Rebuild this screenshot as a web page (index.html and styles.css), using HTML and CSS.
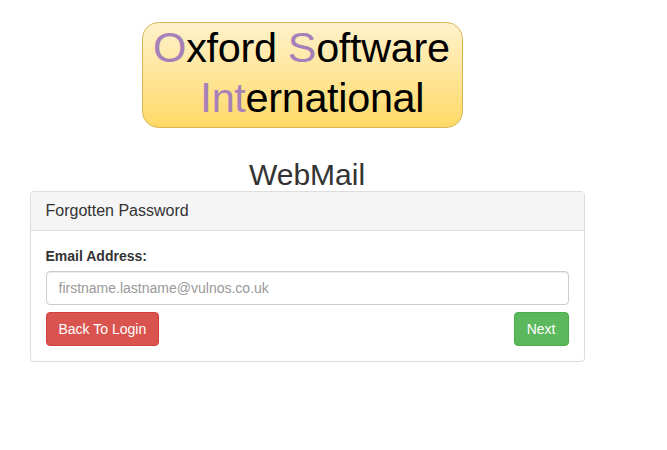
FILE: index.html
```html
<!DOCTYPE html>
<html lang="en">
<head>
<meta charset="utf-8">
<title>WebMail</title>
<link rel="stylesheet" href="styles.css">
</head>
<body>
<main class="container">
  <svg class="logo" width="322" height="107" viewBox="0 0 322 107" role="img">
    <defs>
      <linearGradient id="gold" x1="0" y1="0" x2="0" y2="1">
        <stop offset="0" stop-color="#fff2cc"/>
        <stop offset="1" stop-color="#ffd966"/>
      </linearGradient>
    </defs>
    <rect x="0.5" y="0.5" width="320" height="105" rx="16" fill="url(#gold)" stroke="#d6b656"/>
    <text class="logo-text" x="11" y="40.3" textLength="297"><tspan class="accent cap">O</tspan>xford <tspan class="accent cap">S</tspan>oftware</text>
    <text class="logo-text" x="58" y="90.3" textLength="224.5"><tspan class="accent cap">I</tspan><tspan class="accent">nt</tspan>ernational</text>
  </svg>
  <h1 class="title">WebMail</h1>
  <section class="panel">
    <header class="panel-heading">Forgotten Password</header>
    <form class="panel-body">
      <label class="label" for="email">Email Address:</label>
      <input class="input" id="email" type="text" placeholder="firstname.lastname@vulnos.co.uk">
      <div class="actions">
        <button class="btn btn-danger" type="button">Back To Login</button>
        <button class="btn btn-success" type="button">Next</button>
      </div>
    </form>
  </section>
</main>
</body>
</html>
```
FILE: styles.css
```css
* { box-sizing: border-box; }
body {
  margin: 0;
  background: #fff;
  color: #333;
  font: 14px/20px "Liberation Sans", Arial, sans-serif;
}
.container {
  width: 555px;
  margin: 22px 0 0 29.5px;
  display: flex;
  flex-direction: column;
  align-items: center;
}
.logo { display: block; margin-right: 8px; }
.logo-text { font: 41.4px "Liberation Sans", Arial, sans-serif; fill: #000; }
.logo-text .accent { fill: #a680b8; }
.logo-text .cap { font-size: 43px; }
.title { margin: 29px 0 0; font-size: 30px; font-weight: 400; line-height: 33px; }
.panel {
  width: 100%;
  border: 1px solid #ddd;
  border-radius: 4px;
  box-shadow: 0 1px 1px rgba(0, 0, 0, .05);
}
.panel-heading {
  padding: 10px 15px;
  background: #f5f5f5;
  border-bottom: 1px solid #ddd;
  border-radius: 3px 3px 0 0;
  font-size: 16px;
  line-height: 18px;
}
.panel-body { margin: 0; padding: 15px; }
.label { display: block; margin-bottom: 5px; font-weight: 700; }
.input {
  display: block;
  width: 100%;
  height: 34px;
  padding: 6px 12px;
  border: 1px solid #ccc;
  border-radius: 4px;
  box-shadow: inset 0 1px 1px rgba(0, 0, 0, .075);
  font: inherit;
}
.input::placeholder { color: #999; opacity: 1; }
.actions { display: flex; justify-content: space-between; margin-top: 7px; }
.btn {
  height: 34px;
  padding: 6px 12px;
  border: 1px solid;
  border-radius: 4px;
  color: #fff;
  font: inherit;
}
.btn-danger { background: #d9534f; border-color: #d43f3a; }
.btn-success { background: #5cb85c; border-color: #4cae4c; }
```
